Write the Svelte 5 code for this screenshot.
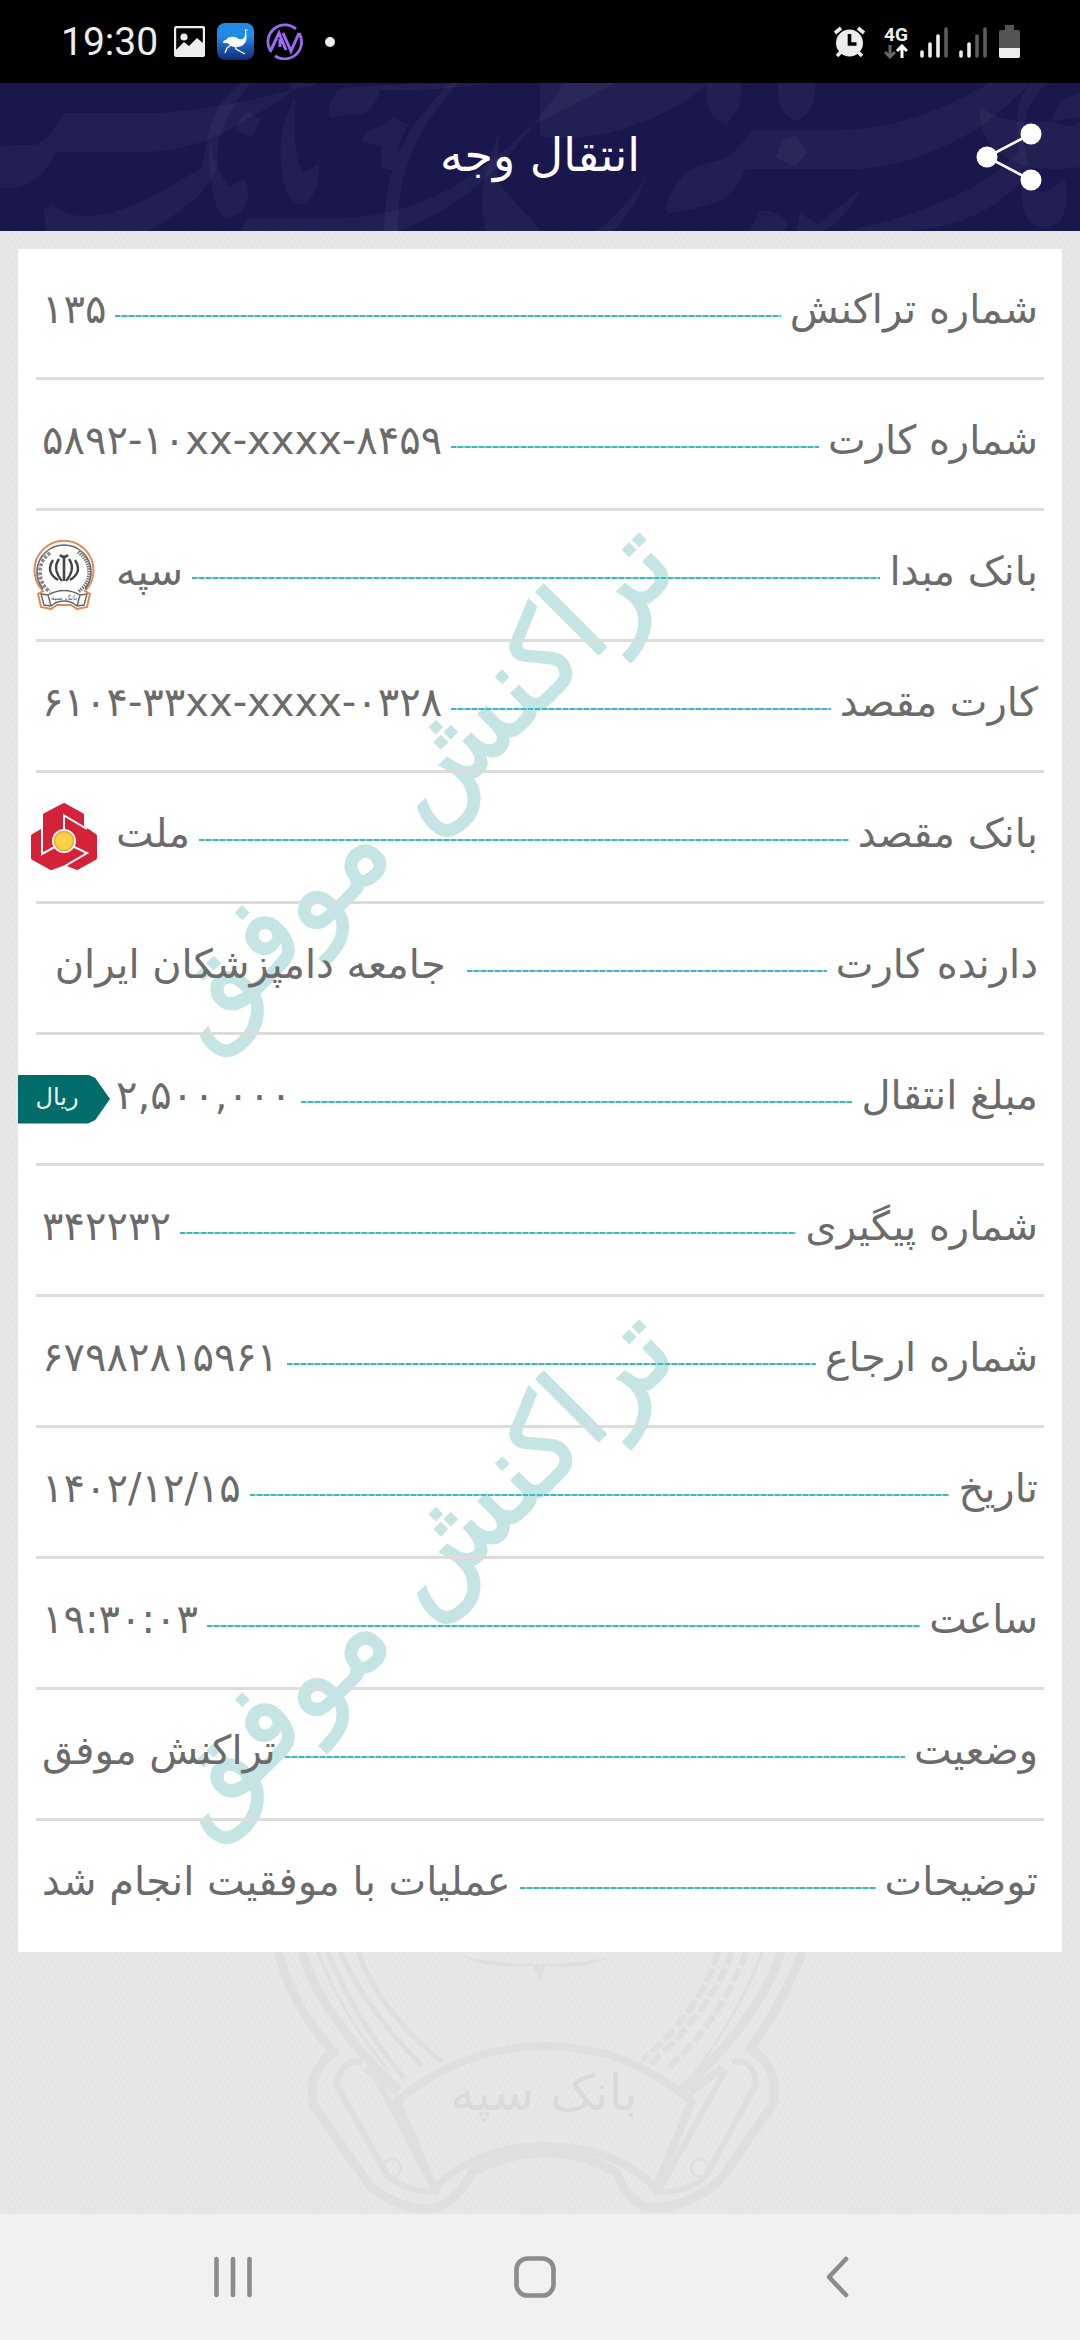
<script lang="ts">
  type Mark = "sepah" | "mellat" | "rial";

  interface Row {
    label: string;
    value: string;
    mark?: Mark;
  }

  const rows: Row[] = [
    { label: "شماره تراکنش", value: "۱۳۵" },
    { label: "شماره کارت", value: "۵۸۹۲-۱۰xx-xxxx-۸۴۵۹" },
    { label: "بانک مبدا", value: "سپه", mark: "sepah" },
    { label: "کارت مقصد", value: "۶۱۰۴-۳۳xx-xxxx-۰۳۲۸" },
    { label: "بانک مقصد", value: "ملت", mark: "mellat" },
    { label: "دارنده کارت", value: " جامعه دامپزشکان ایران " },
    { label: "مبلغ انتقال", value: "۲,۵۰۰,۰۰۰", mark: "rial" },
    { label: "شماره پیگیری", value: "۳۴۲۲۳۲" },
    { label: "شماره ارجاع", value: "۶۷۹۸۲۸۱۵۹۶۱" },
    { label: "تاریخ", value: "۱۴۰۲/۱۲/۱۵" },
    { label: "ساعت", value: "۱۹:۳۰:۰۳" },
    { label: "وضعیت", value: "تراکنش موفق" },
    { label: "توضیحات", value: "عملیات با موفقیت انجام شد" },
  ];

  const stamps = [0, 1];
  const signals = [3, 2];
</script>

<div class="screen">
  <div class="status">
    <div class="status-side">
      <span class="clock">19:30</span>
      <svg width="31" height="31" viewBox="0 0 31 31">
        <rect x="1" y="1" width="29" height="29" rx="2" fill="none" stroke="#ededed" stroke-width="2.4" />
        <circle cx="10" cy="11" r="3.6" fill="#ededed" />
        <path d="M2 24l8-8 5 4 8-8 7 6v12H2z" fill="#ededed" />
      </svg>
      <svg width="37" height="37" viewBox="0 0 37 37">
        <defs>
          <linearGradient id="sky" x1="0" y1="0" x2="0" y2="1">
            <stop offset="0.35" stop-color="#228be6" />
            <stop offset="1" stop-color="#142a78" />
          </linearGradient>
        </defs>
        <rect width="37" height="37" rx="8" fill="url(#sky)" />
        <path d="M6 20q0-3 3-3c2-4 9-4 13-1 4 1 6-1 6-5V6l3 1-2 1c1 7 1 11-3 14-3 2-5 2-8 2-4 0-5-3-8-4z" fill="#fff" />
        <path d="M14 22l-4 3-2 5M18 22l1 4 9 5" fill="none" stroke="#fff" stroke-width="1.3" />
      </svg>
      <svg width="37" height="37" viewBox="0 0 37 37" fill="none" stroke="#9c6af0">
        <path d="M30 6A17 17 0 0 0 4 27M9 33A17 17 0 0 0 33 10" stroke-width="2.8" />
        <path d="M4 29L13 10l7 17M14 16v8M17 10l8 18 8-18" stroke-width="3" />
      </svg>
      <span class="dot"></span>
    </div>
    <div class="status-side">
      <svg width="33" height="32" viewBox="0 0 33 32">
        <path d="M2 7l6-5M31 7l-6-5" stroke="#ededed" stroke-width="3.6" />
        <path d="M4 30l5-5M29 30l-5-5" stroke="#ededed" stroke-width="3.6" />
        <circle cx="16.500" cy="17" r="13.500" fill="#ededed" />
        <path d="M16.500 8v10h7" fill="none" stroke="#000" stroke-width="3.6" />
      </svg>
      <div class="network">
        <span>4G</span>
        <svg width="24" height="15" viewBox="0 0 24 15" fill="none" stroke-width="3">
          <path d="M6 1v11M1 8l5 5 5-5" stroke="#666" />
          <path d="M18 14V3M13 7l5-5 5 5" stroke="#fff" />
        </svg>
      </div>
      <div class="signals">
        {#each signals as level}
          <svg width="28" height="32" viewBox="0 0 28 32" stroke-width="3.6" stroke-linecap="round">
            {#each [7, 15, 23, 30] as size, i}
              <path d="M{2 + i * 8} 30V{33 - size}" stroke={i < level ? "#ededed" : "#5c5c5c"} />
            {/each}
          </svg>
        {/each}
      </div>
      <svg width="21" height="33" viewBox="0 0 21 33">
        <path d="M6 0h9v5h4q2 0 2 2v24q0 2-2 2H2q-2 0-2-2V7q0-2 2-2h4z" fill="#545454" />
        <path d="M0 23h21v8q0 2-2 2H2q-2 0-2-2z" fill="#ededed" />
      </svg>
    </div>
  </div>

  <header>
    <svg class="swashes" viewBox="0 0 1080 148" preserveAspectRatio="xMidYMid slice" aria-hidden="true">
      <g fill="#fff" fill-opacity="0.04">
        <path d="M0 64q10-3 36-2 16-10 28-32h80C200 31 260 15 320 0h-70C310-8 300 10 250 34 200 68 160 69 130 69H56C40 98 30 105 0 105z" />
        <path d="M44 126l8-6c18 20 60 24 150-36 8-40 8-60 40-84h8C226 30 214 60 218 80c-8 32-40 50-70 68H46z" />
        <path d="M210 60q6 30 20 44l14-8q8 14 0 28c-8 14-24 14-28-2q-8-30-6-62z" />
        <path d="M295 14v36q0 30 9 40l15-9q0 26-10 36c-8 10-20 2-24-14-8-30-6-58 10-89z" />
        <path d="M248 28l13 8-9 18q-8-2-17-7 4-14 13-19z" />
        <path d="M338 7q10-6 150-7-40 8-108 7-4 16-16 23l-35 5q-2-14 9-28z" />
        <path d="M393 34l15 8-9 20-5 26-13-4v-20l-19-6q2-12 19-14zM450 0h8c-30 36-60 70-60 148h-14c2-70 20-100 66-148z" />
        <path d="M248 135h90c80 0 140-40 190-90L615 0h-50C520 60 490 110 400 148H240z" />
        <path d="M500 48q-4 30-3 50 16 20 33 36l10 14h-54q-12-40 14-100z" />
        <path d="M540 0h170C660 40 600 60 540 54zM707 0h34c2 20-4 30-15 42-18-8-20-20-19-42zM778 0h37c0 20-4 30-18 38-16-6-20-20-19-38z" />
        <path d="M754 47h80c60 0 110-20 155-47h40C980 60 900 84 860 86H745c-16 40-40 36-76 44l-4-4c14-40 30-44 60-50 12-8 18-18 29-29z" />
        <path d="M795 53l12 16-12 14-19-8 6-18zM645 94c-16 28-40 50-50 54h18q26-26 32-54zM760 128q16-2 28 12l-3 8h-36zM860 106c-10 24-30 40-38 42h-26l4-18 18 12z" />
        <path d="M1030 0h16c-30 30-24 60-16 86-20 30-60 60-130 62h-50c80-20 130-40 170-80-6-30-4-50 10-68z" />
        <path d="M1022 100q20 20 42-5 8 20-4 44c-30 16-40-8-38-39zM1080 10q-24 6-28 28l18 6 10-6zM980 24q30 24 100 10v50c-40 6-104 0-100-60z" />
      </g>
    </svg>
    <h1>انتقال وجه</h1>
    <button class="share" type="button" aria-label="اشتراک گذاری">
      <svg width="66" height="70" viewBox="0 0 66 70" fill="#fff">
        <path d="M55 12L11 35l44 23" fill="none" stroke="#fff" stroke-width="2.6" />
        <circle cx="55" cy="12" r="10.500" />
        <circle cx="11" cy="35" r="10.500" />
        <circle cx="55" cy="58" r="10.500" />
      </svg>
    </button>
  </header>

  <main>
    <section class="receipt">
      <svg class="stamps" viewBox="0 0 1044 1703" aria-hidden="true">
        {#each stamps as n}
          <text transform="translate(664 {322 + n * 787}) rotate(-45)" direction="rtl">تراکنش موفق</text>
        {/each}
      </svg>
      <dl>
        {#each rows as row}
          <div class="row">
            <dt>{row.label}</dt>
            <span class="leader"></span>
            <dd>{row.value}</dd>
            {#if row.mark === "sepah"}
              <span class="mark">
                <svg width="62" height="70" viewBox="0 0 62 70" fill="none">
                  <path d="M10 51A29.500 29.500 0 1 1 52 51L57 54 54 67 44 69 38 65H24L18 69 8 67 5 54z" stroke="#e08a5c" stroke-width="2" />
                  <path d="M10 49A27 27 0 1 1 52 49" stroke="#666" stroke-width="1.6" />
                  <path d="M17 13Q7 20 7 32t10 20" stroke="#888" stroke-width="3.6" stroke-dasharray="3 1.500" />
                  <path d="M45 12Q56 20 56 32T45 52" stroke="#777" stroke-width="3.6" stroke-dasharray="1.500 1" />
                  <path d="M31 18v23M27 15q4 4 8 0" stroke="#444" stroke-width="2.6" />
                  <path d="M26 19q-7 10 3 22M36 19q7 10-3 22M20 20q-8 12 5 20M42 20q8 12-5 20" stroke="#444" stroke-width="2.4" />
                  <path d="M8 54l7 1q16-9 32 0l7-1-3 11-7 1-4-3q-9-4-18 0l-4 3-7-1zM15 55l3 11M47 55l-3 11" fill="#fff" stroke="#666" stroke-width="1.4" />
                  <text class="ribbon" x="31" y="60" direction="rtl">بانک سپه</text>
                </svg>
              </span>
            {:else if row.mark === "mellat"}
              <span class="mark">
                <svg width="68" height="70" viewBox="0 0 68 70">
                  <path
                    d="M34 3L52 13V25L65 34V56L47 66 34.500 61 21 66 3 56V34L15 27V13z"
                    fill="#d42338"
                    stroke="#d42338"
                    stroke-width="4"
                    stroke-linejoin="round"
                  />
                  <path d="M57 27L34 13.500V40L12 52V25M34 40l23 11-22 13" fill="none" stroke="#fff" stroke-width="2" />
                  <circle cx="34" cy="39" r="11" fill="#fbd04b" stroke="#fff" stroke-width="2" />
                  <circle cx="34" cy="39" r="9.500" fill="none" stroke="#f2a531" stroke-width="1.500" />
                </svg>
              </span>
            {:else if row.mark === "rial"}
              <span class="mark rial">ریال</span>
            {/if}
          </div>
        {/each}
      </dl>
    </section>

    <!-- lower part of the bank emblem, printed on the page background -->
    <svg class="emblem" width="540" height="262" viewBox="0 0 540 262" fill="none" stroke="#dfdfdf" aria-hidden="true">
      <path d="M8 0Q24 58 64 100Q36 120 44 154L100 234Q130 258 160 257Q186 252 202 220Q276 182 346 220Q360 256 386 256Q420 254 450 228L502 154Q512 118 480 96Q514 50 532 0" stroke-width="9" stroke-linejoin="round" />
      <path d="M32 0Q52 66 128 138M511 0Q490 66 412 138" stroke-width="9" />
      <path d="M48 0Q70 60 118 118M492 0Q470 60 424 122" stroke-width="3" />
      <path d="M58 0Q84 66 134 126M70 0Q98 60 152 114M88 0Q110 60 172 110" stroke-width="5" />
      <path d="M476 0Q450 70 398 116M462 0Q440 60 380 112M448 0Q430 60 372 108" stroke-width="6" stroke-dasharray="14 4" />
      <path d="M127 149Q194 94 276 94Q356 94 422 149L386 236Q344 194 276 194Q208 194 164 236z" stroke-width="8" stroke-linejoin="round" />
      <path d="M92 110Q72 106 66 132L118 224Q136 240 166 240L102 118M462 110Q484 106 486 132L436 224Q420 240 388 240L456 118" stroke-width="6" />
      <path d="M96 116l32 24M452 116l-32 24" stroke-width="8" />
      <circle cx="122" cy="216" r="9" stroke-width="3" />
      <circle cx="430" cy="216" r="9" stroke-width="3" />
      <path d="M192 4q76 16 154 0l-32 10q-28 2-38 0l-6 16-8-16q-44 4-70-10z" fill="#dfdfdf" stroke="none" />
      <text class="banner" x="274" y="158" direction="rtl">بانک سپه</text>
    </svg>
  </main>

  <nav>
    <button type="button" aria-label="Recents">
      <svg width="38" height="42" viewBox="0 0 38 42">
        <path d="M2.500 3v36M19 3v36M35.500 3v36" />
      </svg>
    </button>
    <button type="button" aria-label="Home">
      <svg width="42" height="42" viewBox="0 0 42 42">
        <rect x="2.500" y="2.500" width="37" height="37" rx="11" />
      </svg>
    </button>
    <button type="button" aria-label="Back">
      <svg width="24" height="42" viewBox="0 0 24 42">
        <path d="M21 3L4 21l17 18" />
      </svg>
    </button>
  </nav>
</div>

<style>
  :global(body) {
    margin: 0;
  }

  .screen {
    display: flex;
    flex-direction: column;
    min-height: 100vh;
    font-family: "DejaVu Sans", sans-serif;
    background-color: #e8e8e7;
    background-image:
      repeating-linear-gradient(60deg, #0000 0 3px, #00000002 3px 5px),
      repeating-linear-gradient(-60deg, #0000 0 3px, #00000002 3px 5px);
  }

  svg {
    display: block;
    flex: none;
  }

  button {
    display: flex;
    align-items: center;
    justify-content: center;
    padding: 0;
    border: none;
    background: none;
    cursor: pointer;
  }

  .status {
    display: flex;
    justify-content: space-between;
    height: 83px;
    padding: 0 60px 0 61px;
    box-sizing: border-box;
    background: #000;
    color: #ededed;
    font-family: Roboto, sans-serif;
  }

  .status-side {
    display: flex;
    align-items: center;
    gap: 12px;
  }

  .clock {
    margin-right: 4px;
    font-size: 39px;
    line-height: 44px;
  }

  .dot {
    width: 10px;
    height: 10px;
    margin-left: 10px;
    border-radius: 50%;
    background: #ededed;
  }

  .network {
    margin-left: 6px;
    font-size: 19px;
    font-weight: 700;
    line-height: 19px;
  }

  .signals {
    display: flex;
    gap: 11px;
  }

  header {
    position: relative;
    display: flex;
    align-items: center;
    justify-content: center;
    height: 148px;
    background: #1a174d;
    overflow: hidden;
  }

  .swashes {
    position: absolute;
    inset: 0;
    width: 100%;
    height: 100%;
  }

  h1 {
    position: relative;
    margin: 0;
    padding-bottom: 4px;
    color: #fff;
    font-size: 46px;
    font-weight: 400;
    line-height: 60px;
  }

  .share {
    position: absolute;
    right: 38px;
  }

  main {
    flex: 1;
    display: flex;
    flex-direction: column;
    padding: 18px 18px 0;
  }

  .receipt {
    position: relative;
    background: #fff;
  }

  .stamps {
    position: absolute;
    inset: 0;
    width: 100%;
    height: 100%;
    font-size: 116px;
    fill: #c5e5e4;
    stroke: #c5e5e4;
    stroke-width: 2px;
  }

  dl {
    position: relative;
    margin: 0;
    direction: rtl;
    color: #6b6b6b;
    font-size: 40px;
    line-height: 56px;
  }

  .row {
    display: flex;
    align-items: center;
    height: 128px;
    margin: 0 18px;
    padding: 0 6px;
    border-bottom: 3px solid #dcdcdc;
  }

  .row:last-child {
    border-bottom-color: #fff;
  }

  dt,
  dd {
    margin: 0;
    padding-bottom: 8px;
    white-space: pre;
  }

  dd {
    unicode-bidi: plaintext;
  }

  .leader {
    flex: 1;
    height: 2px;
    margin: 6px 9px 0;
    background: repeating-linear-gradient(90deg, #35bdbd 0 5px, #8edada 5px 7px);
  }

  .mark {
    display: flex;
    justify-content: center;
    width: 92px;
    margin: 0 6px 0 -24px;
  }

  .rial {
    height: 49px;
    box-sizing: border-box;
    padding-right: 14px;
    background: #006d6b;
    clip-path: polygon(0 0, 76% 0, 84% 7%, 100% 50%, 84% 93%, 76% 100%, 0 100%);
    color: #e4f5f4;
    font-size: 24px;
    line-height: 44px;
  }

  .ribbon {
    fill: #555;
    font-size: 7px;
    text-anchor: middle;
  }

  .emblem {
    align-self: center;
  }

  .banner {
    fill: #dadada;
    stroke: none;
    font-size: 50px;
    text-anchor: middle;
  }

  nav {
    display: grid;
    grid-template-columns: repeat(3, 1fr);
    height: 126px;
    padding: 0 92px 0 82px;
    background: #f1f1f1;
  }

  nav svg {
    fill: none;
    stroke: #8c8c8c;
    stroke-width: 4.6;
    stroke-linecap: round;
    stroke-linejoin: round;
  }
</style>
